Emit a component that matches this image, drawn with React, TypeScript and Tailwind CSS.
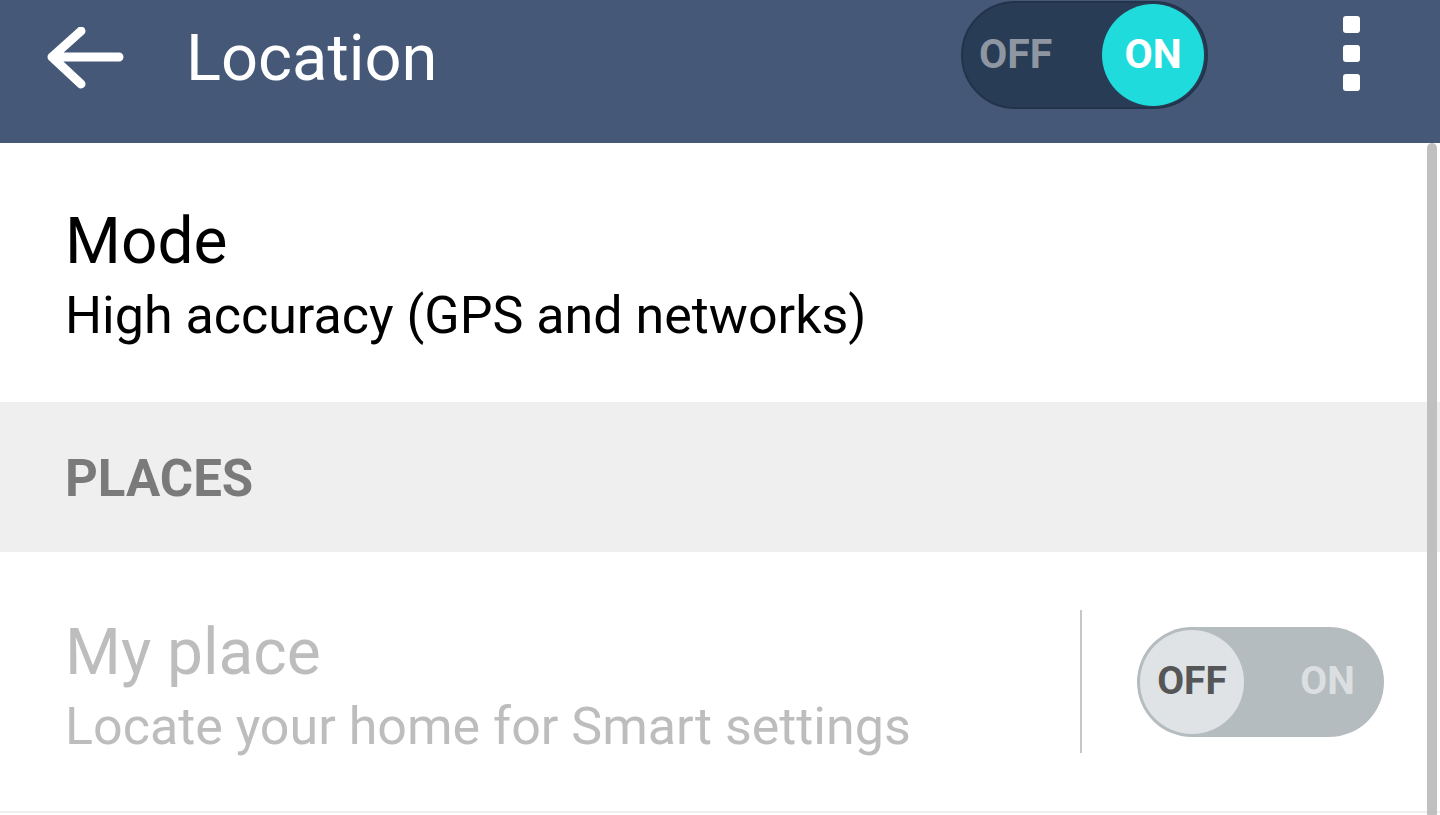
import React from "react";

const font = { fontFamily: "Roboto, 'Noto Sans', sans-serif" };

function BackArrow() {
  return (
    <svg width="84" height="66" viewBox="0 0 84 66" className="shrink-0">
      <path
        d="M6 30 H73 M6 30 L35 4 M6 30 L35 57"
        stroke="white"
        strokeWidth="9"
        strokeLinecap="round"
        strokeLinejoin="round"
        fill="none"
      />
    </svg>
  );
}

function MasterSwitch() {
  return (
    <div className="flex h-[108px] w-[247px] items-center justify-between rounded-full border-2 border-[#22344b] bg-[#283c55] pl-[16px] pr-[2px]">
      <span className="text-[41px] font-bold text-[#8e96a2]">OFF</span>
      <span className="flex h-[102px] w-[102px] items-center justify-center rounded-full bg-[#20dbdb] text-[41px] font-bold text-white">
        ON
      </span>
    </div>
  );
}

function PlaceSwitch() {
  return (
    <div className="flex h-[110px] w-[247px] items-center rounded-full bg-[#b5bcbf] p-[3px]">
      <span className="flex h-[104px] w-[104px] items-center justify-center rounded-full bg-[#dfe3e6] text-[39px] font-bold text-[#545657]">
        OFF
      </span>
      <span className="flex-1 pl-[30px] text-center text-[39px] font-bold text-[#dcdfe1]">ON</span>
    </div>
  );
}

export default function App() {
  return (
    <div className="relative h-[815px] w-[1440px] overflow-hidden bg-white" style={font}>
      {/* Action bar */}
      <header className="flex h-[143px] items-center bg-[#465878] pb-[26px]">
        <div className="ml-[46px] mt-[2px]">
          <BackArrow />
        </div>
        <h1 className="ml-[56px] text-[65px] leading-none text-white">Location</h1>
        <div className="ml-auto mt-[-8px]">
          <MasterSwitch />
        </div>
        <div className="ml-[135px] mr-[80px] mt-[-10px] flex flex-col gap-[12px]">
          <span className="h-[17px] w-[17px] rounded-[3px] bg-white" />
          <span className="h-[17px] w-[17px] rounded-[3px] bg-white" />
          <span className="h-[17px] w-[17px] rounded-[3px] bg-white" />
        </div>
      </header>

      {/* Mode */}
      <section className="flex h-[259px] flex-col justify-center pl-[65px] pt-[6px]">
        <div className="text-[64px] leading-[76px] text-black">Mode</div>
        <div className="mt-[4px] text-[52px] leading-[64px] text-black">High accuracy (GPS and networks)</div>
      </section>

      {/* Places category */}
      <div className="flex h-[150px] items-center bg-[#efefef] pl-[65px] pt-[4px]">
        <span className="text-[51px] font-bold text-[#7a7a7a]">PLACES</span>
      </div>

      {/* My place */}
      <section className="flex h-[261px] items-center border-b-2 border-[#efefef] pl-[65px] pr-[56px]">
        <div className="flex-1 pt-[10px]">
          <div className="text-[64px] leading-[76px] text-[#bdbdbd]">My place</div>
          <div className="mt-[4px] text-[52px] leading-[64px] text-[#bdbdbd]">Locate your home for Smart settings</div>
        </div>
        <div className="mr-[55px] h-[143px] w-[2px] bg-[#c4c8cb]" />
        <PlaceSwitch />
      </section>

      {/* Scroll indicator */}
      <div className="absolute right-[3px] top-[143px] h-[672px] w-[10px] rounded-t-full bg-[#c0c0c0]" />
    </div>
  );
}
